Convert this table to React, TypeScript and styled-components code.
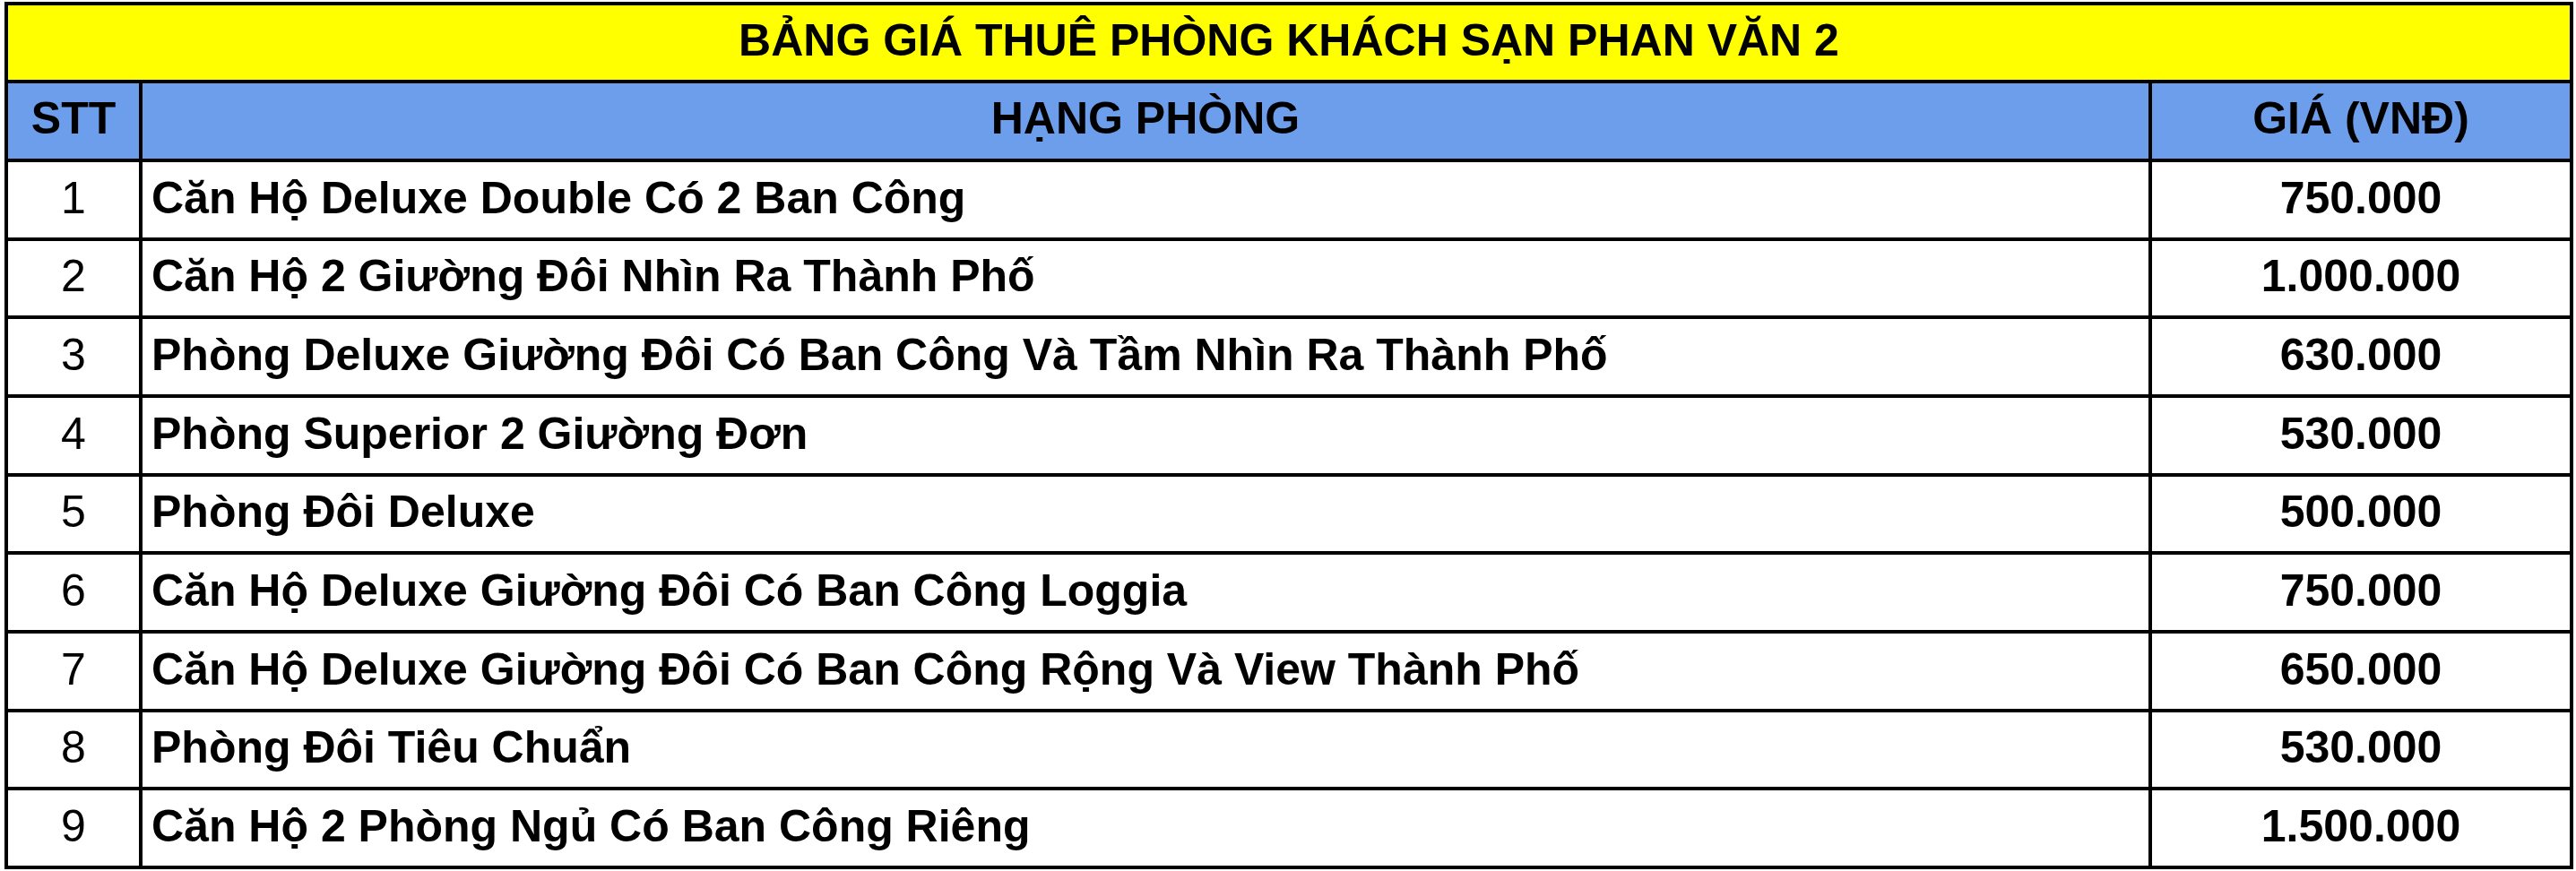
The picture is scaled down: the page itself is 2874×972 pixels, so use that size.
import React from 'react';
import styled, {createGlobalStyle} from 'styled-components';

const rooms = [
    {name: 'Căn Hộ Deluxe Double Có 2 Ban Công', price: '750.000'},
    {name: 'Căn Hộ 2 Giường Đôi Nhìn Ra Thành Phố', price: '1.000.000'},
    {name: 'Phòng Deluxe Giường Đôi Có Ban Công Và Tầm Nhìn Ra Thành Phố', price: '630.000'},
    {name: 'Phòng Superior 2 Giường Đơn', price: '530.000'},
    {name: 'Phòng Đôi Deluxe', price: '500.000'},
    {name: 'Căn Hộ Deluxe Giường Đôi Có Ban Công Loggia', price: '750.000'},
    {name: 'Căn Hộ Deluxe Giường Đôi Có Ban Công Rộng Và View Thành Phố', price: '650.000'},
    {name: 'Phòng Đôi Tiêu Chuẩn', price: '530.000'},
    {name: 'Căn Hộ 2 Phòng Ngủ Có Ban Công Riêng', price: '1.500.000'},
];


const App = () => {
    return (
        <>
            <GlobalStyle/>
            <Page>
                <Table>
                    <TitleCell>BẢNG GIÁ THUÊ PHÒNG KHÁCH SẠN PHAN VĂN 2</TitleCell>

                    <HeadCell>STT</HeadCell>
                    <HeadCell>HẠNG PHÒNG</HeadCell>
                    <HeadCell>GIÁ (VNĐ)</HeadCell>

                    {rooms.map((room, key) => (
                        <React.Fragment key={key}>
                            <Cell align={'center'}>{key + 1}</Cell>
                            <Cell bold>{room.name}</Cell>
                            <Cell align={'center'} bold>{room.price}</Cell>
                        </React.Fragment>
                    ))}
                </Table>
            </Page>
        </>
    );
};

export default App;


const GlobalStyle = createGlobalStyle`
    html, body {
        margin: 0;
        padding: 0;
        background: #ffffff;
    }
    body {
        font-family: "Liberation Sans", Arial, sans-serif;
        color: #000000;
    }
`;

const Page = styled.div`
    padding: 2px 0 0 5px;
`;

const Table = styled.div`
    width: 2866px;
    box-sizing: border-box;
    display: grid;
    grid-template-columns: 146px 1fr 466px;
    grid-template-rows: 83px 84px 84px 83px 84px 84px 83px 84px 84px 83px 84px;
    gap: 4px;
    padding: 4px;
    background: #000000;
`;

const BaseCell = styled.div`
    display: flex;
    align-items: center;
    box-sizing: border-box;
    font-size: 50px;
    line-height: normal;
    white-space: nowrap;
`;

const TitleCell = styled(BaseCell)`
    grid-column: 1 / -1;
    justify-content: center;
    padding-bottom: 5px;
    background: #ffff00;
    font-weight: 700;
`;

const HeadCell = styled(BaseCell)`
    justify-content: center;
    padding-bottom: 7px;
    background: #6d9eeb;
    font-weight: 700;
`;

const Cell = styled(BaseCell)<{align?: 'center' | 'left'; bold?: boolean}>`
    justify-content: ${p => p.align === 'center' ? 'center' : 'flex-start'};
    padding: 0 10px 5px 10px;
    background: #ffffff;
    font-weight: ${p => p.bold ? 700 : 400};
`;
